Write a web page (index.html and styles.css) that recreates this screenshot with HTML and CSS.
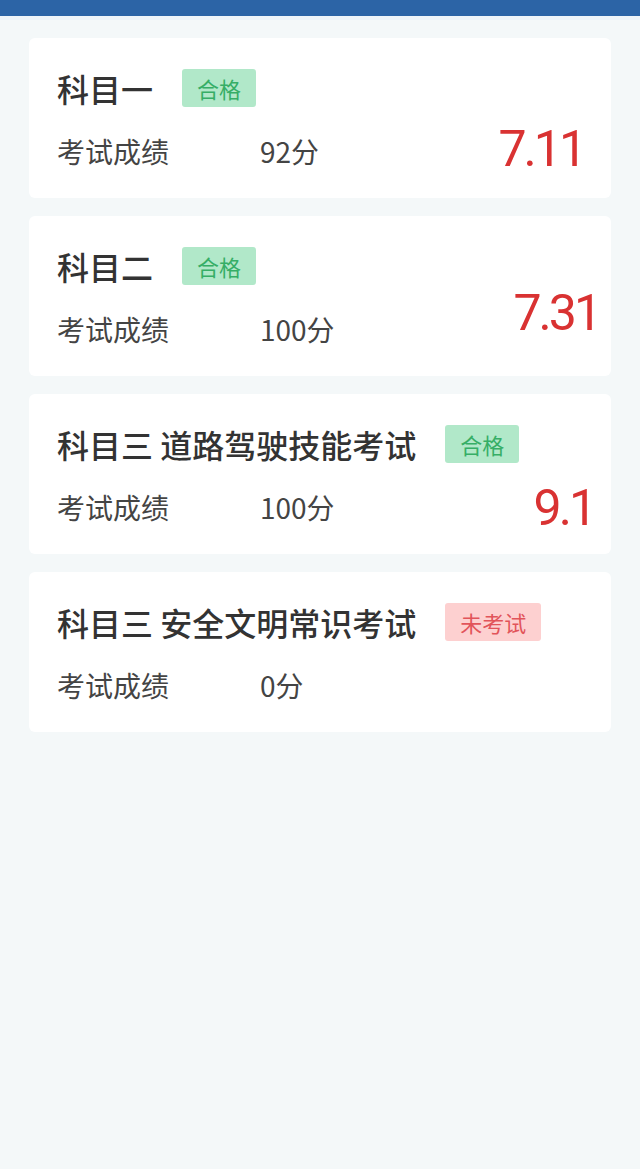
FILE: index.html
```html
<!DOCTYPE html>
<html lang="zh-CN">
<head>
  <meta charset="UTF-8">
  <meta name="viewport" content="width=device-width, initial-scale=1.0">
  <title>考试成绩</title>
  <link rel="stylesheet" href="styles.css">
</head>
<body>

  <div class="top-bar"></div>

  <div class="score-list">
    <div class="score-card">
      <div class="card-title">
        <span class="subject">科目一</span>
        <span class="tag tag-pass">合格</span>
      </div>
      <div class="card-row">
        <span class="label">考试成绩</span>
        <span class="value">92分</span>
      </div>
      <span class="note note-one">7.11</span>
    </div>

    <div class="score-card">
      <div class="card-title">
        <span class="subject">科目二</span>
        <span class="tag tag-pass">合格</span>
      </div>
      <div class="card-row">
        <span class="label">考试成绩</span>
        <span class="value">100分</span>
      </div>
      <span class="note note-two">7.31</span>
    </div>

    <div class="score-card">
      <div class="card-title">
        <span class="subject">科目三 道路驾驶技能考试</span>
        <span class="tag tag-pass">合格</span>
      </div>
      <div class="card-row">
        <span class="label">考试成绩</span>
        <span class="value">100分</span>
      </div>
      <span class="note note-three">9.1</span>
    </div>

    <div class="score-card">
      <div class="card-title">
        <span class="subject">科目三 安全文明常识考试</span>
        <span class="tag tag-none">未考试</span>
      </div>
      <div class="card-row">
        <span class="label">考试成绩</span>
        <span class="value">0分</span>
      </div>
    </div>
  </div>

</body>
</html>
```

FILE: styles.css
```css
body {
  margin: 0;
  min-height: 100vh;
  font-family: "Noto Sans CJK SC", "Noto Sans", sans-serif;
  background: #f4f8f9;
}
.top-bar {
  height: 16px;
  background: #2c64a6;
  border-bottom: 4px solid #eef4f9;
}
.score-list {
  display: flex;
  flex-direction: column;
  gap: 18px;
  padding: 18px 29px;
}
.score-card {
  position: relative;
  display: flex;
  flex-direction: column;
  gap: 26px;
  height: 160px;
  box-sizing: border-box;
  padding: 31px 28px 0;
  background: #ffffff;
  border-radius: 6px;
}
.card-title {
  display: flex;
  align-items: center;
  height: 38px;
}
.subject {
  font-size: 32px;
  font-weight: 500;
  color: #333;
}
.tag {
  margin-left: 29px;
  padding: 0 15px;
  height: 38px;
  line-height: 38px;
  font-size: 22px;
  border-radius: 3px;
}
.tag-pass {
  background: #b1e8c9;
  color: #36ae66;
}
.tag-none {
  background: #fdd0d0;
  color: #e2545a;
}
.card-row {
  display: flex;
  align-items: center;
  height: 36px;
  font-size: 28px;
  color: #444;
}
.label {
  width: 203px;
}
.note {
  position: absolute;
  font-family: Roboto, sans-serif;
  font-size: 50px;
  line-height: 1;
  letter-spacing: -3px;
  color: #d93232;
}
.note-one {
  top: 86px;
  right: 27px;
}
.note-two {
  top: 72px;
  right: 12px;
}
.note-three {
  top: 89px;
  right: 17px;
}
```
